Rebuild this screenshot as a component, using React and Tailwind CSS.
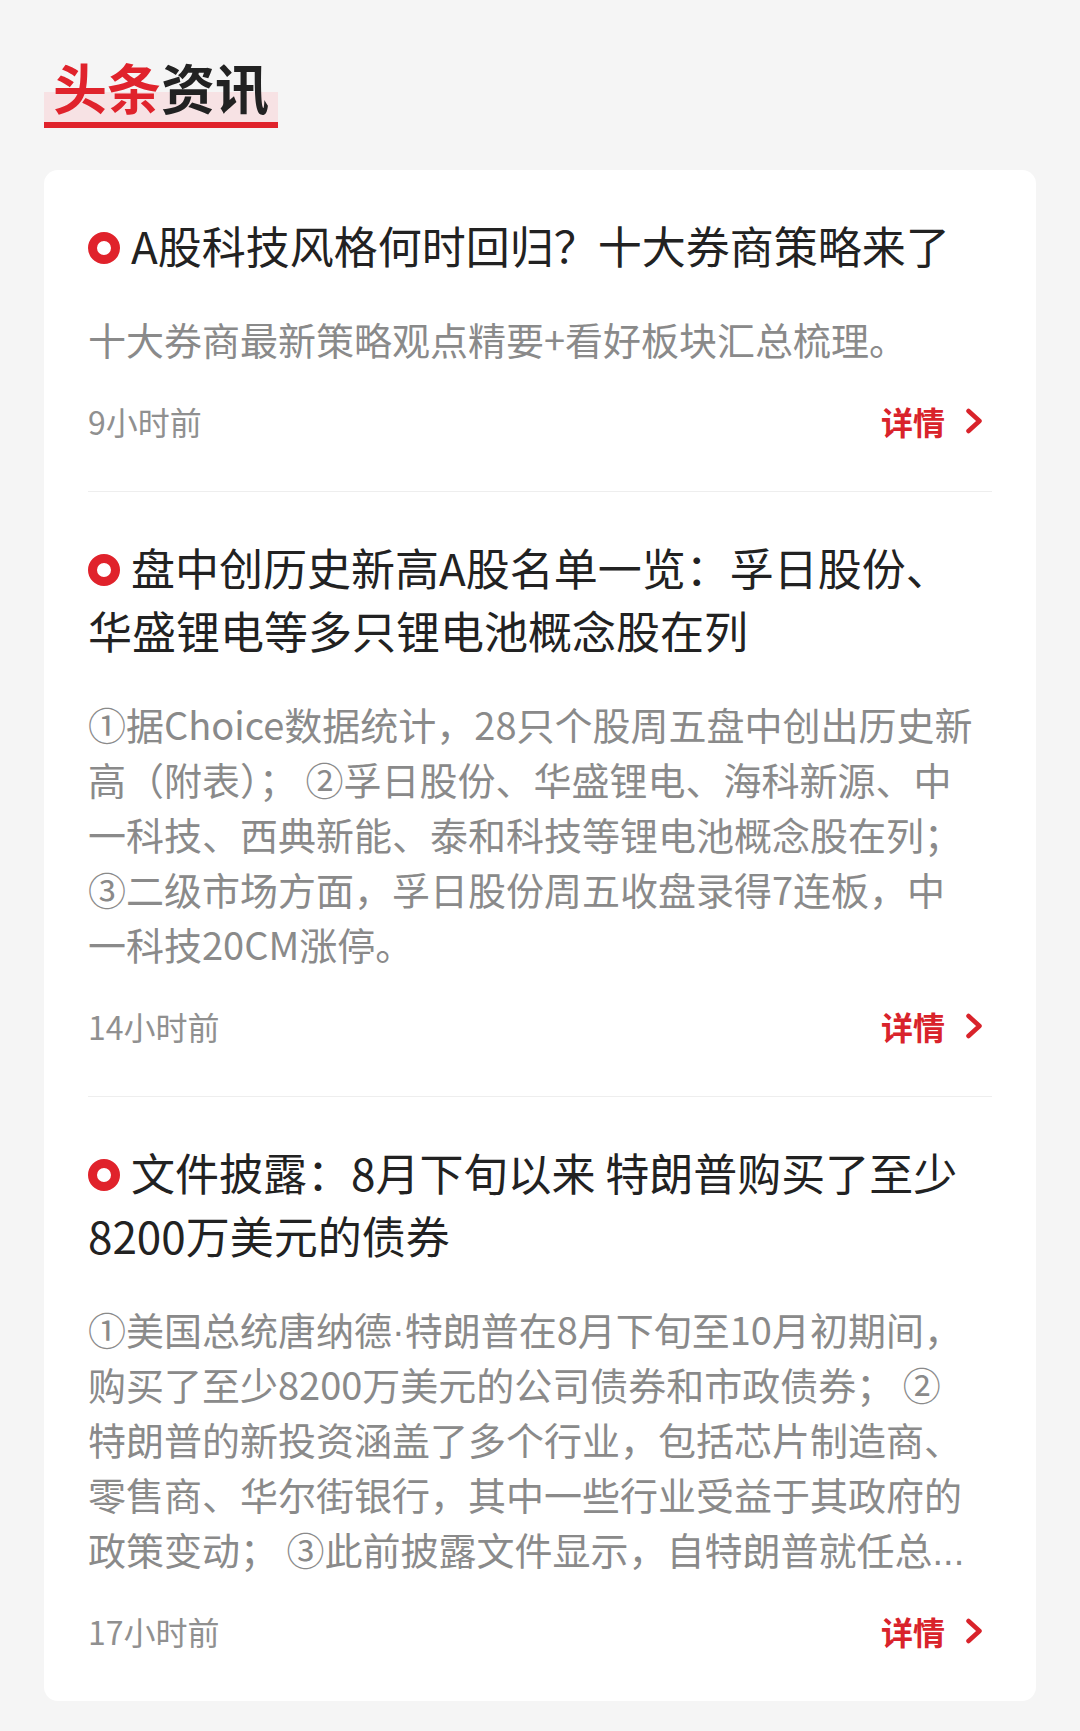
import React from "react";

// 头条资讯列表
const latin = "font-['Liberation_Sans',sans-serif]";

const news = [
  {
    id: 1,
    title: ["A股科技风格何时回归？十大券商策略来了"],
    desc: ["十大券商最新策略观点精要+看好板块汇总梳理。"],
    time: "9小时前",
  },
  {
    id: 2,
    title: ["盘中创历史新高A股名单一览：孚日股份、", "华盛锂电等多只锂电池概念股在列"],
    desc: [
      "①据Choice数据统计，28只个股周五盘中创出历史新",
      "高（附表）； ②孚日股份、华盛锂电、海科新源、中",
      "一科技、西典新能、泰和科技等锂电池概念股在列；",
      "③二级市场方面，孚日股份周五收盘录得7连板，中",
      "一科技20CM涨停。",
    ],
    time: "14小时前",
  },
  {
    id: 3,
    title: ["文件披露：8月下旬以来 特朗普购买了至少", "8200万美元的债券"],
    desc: [
      <>
        ①美国总统唐纳德<span className={latin}>·</span>特朗普在8月下旬至10月初期间，
      </>,
      "购买了至少8200万美元的公司债券和市政债券； ②",
      "特朗普的新投资涵盖了多个行业，包括芯片制造商、",
      "零售商、华尔街银行，其中一些行业受益于其政府的",
      <>
        政策变动； ③此前披露文件显示，自特朗普就任总<span className={latin}>...</span>
      </>,
    ],
    time: "17小时前",
  },
];

function Chevron() {
  return (
    <svg width="18" height="26" viewBox="0 0 18 26" fill="none">
      <path
        d="M3.5 3 L14.5 13 L3.5 23"
        stroke="#d9232b"
        strokeWidth="4.5"
        strokeLinecap="round"
        strokeLinejoin="round"
      />
    </svg>
  );
}

export default function App() {
  return (
    <div className="min-h-screen bg-[#f5f5f5] px-[44px] pt-[60px] pb-[30px] font-['Noto_Sans_CJK_SC','Noto_Sans',sans-serif]">
      {/* 标题 */}
      <div className="inline-block px-[9px] pb-[8px] border-b-[6px] border-[#e0232c] bg-[linear-gradient(to_bottom,transparent_32px,#f7e2e4_32px)] text-[54px] leading-[54px] font-bold">
        <span className="text-[#e0232c]">头条</span>
        <span className="text-[#222222]">资讯</span>
      </div>

      {/* 新闻卡片 */}
      <div className="mt-[42px] bg-white rounded-[14px] px-[44px]">
        {news.map((n, i) => (
          <div
            key={n.id}
            className={`pt-[44px] pb-[50px] ${
              i < news.length - 1 ? "border-b border-[#eeeeee]" : ""
            }`}
          >
            <div className="text-[44px] leading-[63px] text-[#222222] whitespace-nowrap">
              <span className="inline-block w-[32px] h-[32px] rounded-full border-[9px] border-[#e0222b] mr-[11px]"></span>
              {n.title.map((t, k) => (
                <React.Fragment key={k}>
                  {k > 0 && <br />}
                  {t}
                </React.Fragment>
              ))}
            </div>

            <div className="mt-[34px] text-[38px] leading-[55px] text-[#8a8a8a]">
              {n.desc.map((d, k) => (
                <div key={k} className="h-[55px] whitespace-nowrap">
                  {d}
                </div>
              ))}
            </div>

            <div className="mt-[35px] h-[40px] flex items-center justify-between">
              <span className="text-[32px] text-[#909090]">{n.time}</span>
              <span className="flex items-center gap-[20px] pr-[9px]">
                <span className="text-[32px] font-bold text-[#d9232b]">详情</span>
                <Chevron />
              </span>
            </div>
          </div>
        ))}
      </div>
    </div>
  );
}
